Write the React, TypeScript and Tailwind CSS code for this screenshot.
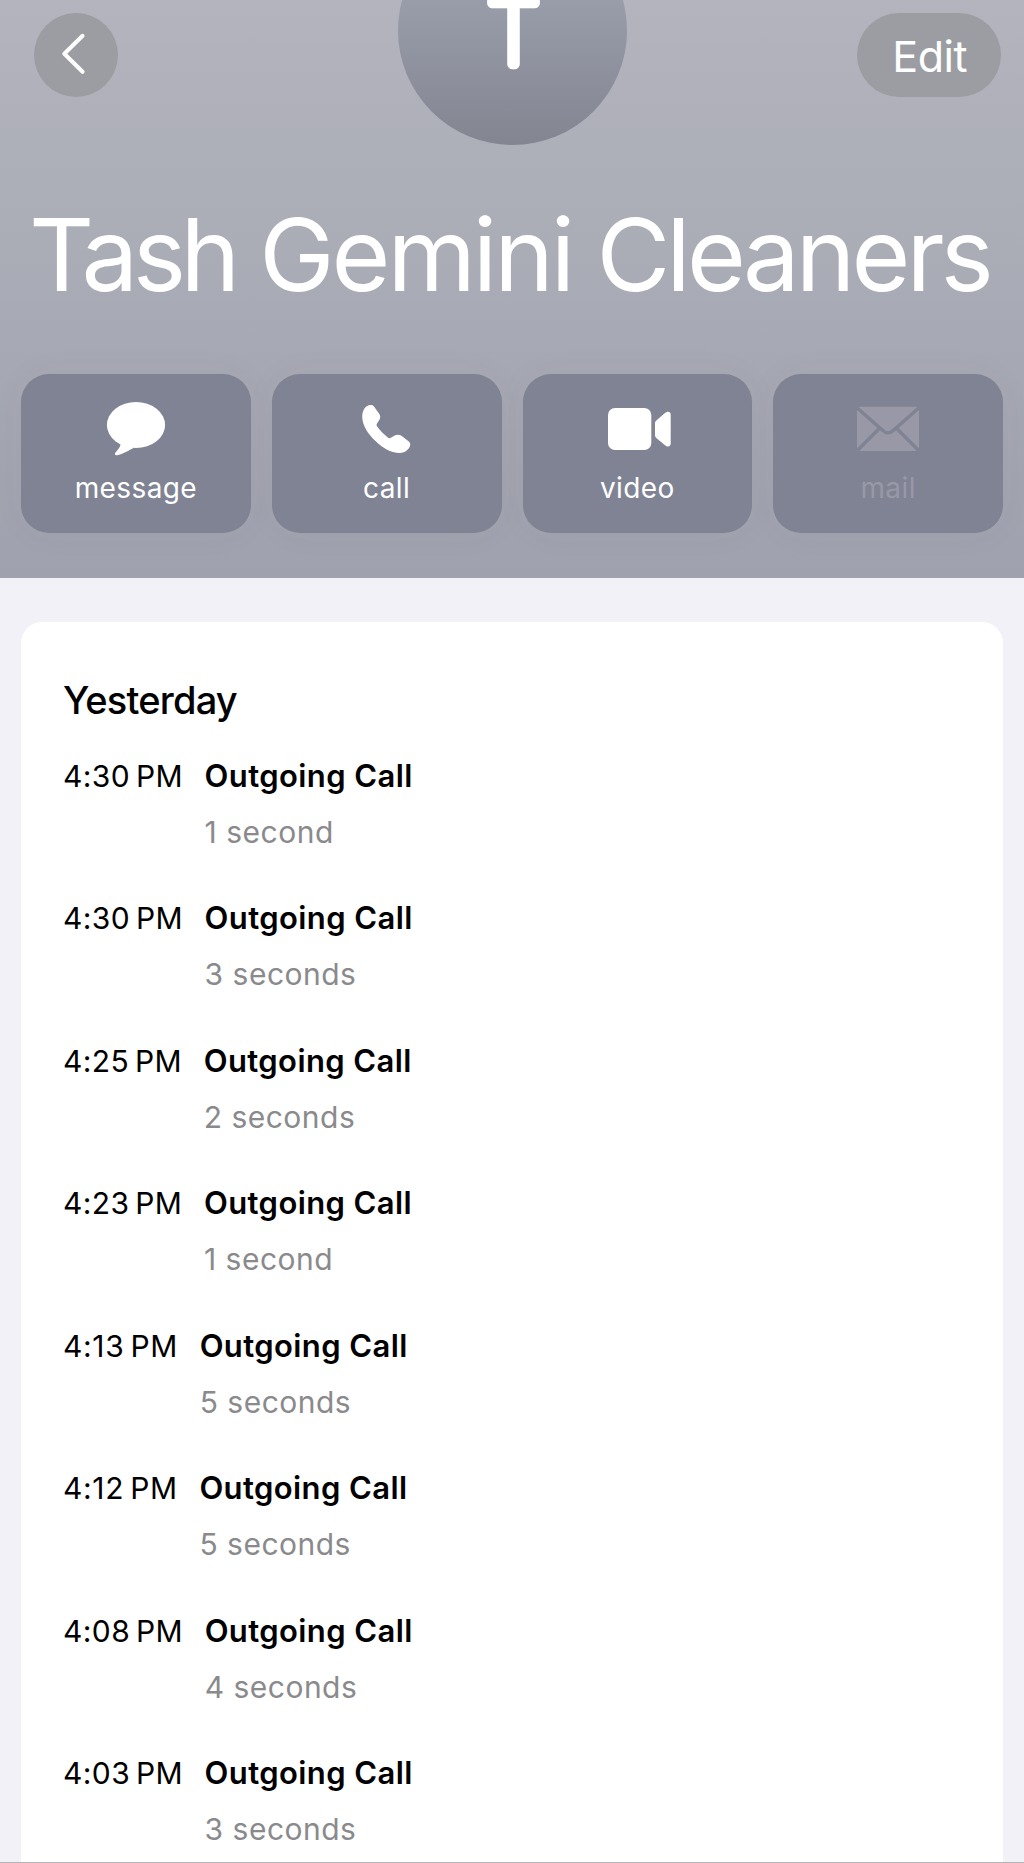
import type { ReactNode } from 'react';

const MessageIcon = () => (
  <svg viewBox="0 0 64 54" className="w-16 h-[54px] overflow-visible" fill="currentColor">
    <ellipse cx="32" cy="23" rx="29.1" ry="23" />
    <path d="M16.5 41C17 45 13 48.5 11.2 51C10.4 52.6 11.3 53.4 13 53.2C19 52.5 25 48 30 45.8Z" />
  </svg>
);

const PhoneIcon = () => (
  <svg viewBox="0 0 64 54" className="w-16 h-[54px] overflow-visible" fill="currentColor">
    <path d="M15.6 3C10.5 3 7.2 8.5 7.2 14.7C7.4 24 14 33 20.5 39C27.5 45.8 35.5 51 44.6 51C50.5 51 54.8 46.5 55.2 43C55.4 41.2 54.8 40.2 53.5 39.2L46.8 34C44.6 32.5 42.4 32.3 40.2 33.3L36.2 35.6C35 36.4 34 36.4 32.8 35.4C28.5 32 25 28.5 22 24.2C21.4 23.2 21.4 22.4 22 21.4L24.3 18C25.6 16 25.6 14 24.3 12L19.2 4.8C18.2 3.4 17.2 3 15.6 3Z" />
  </svg>
);

const VideoIcon = () => (
  <svg viewBox="0 0 64 54" className="w-16 h-[54px] overflow-visible" fill="currentColor">
    <rect x="3" y="6" width="43.3" height="42" rx="7" />
    <path d="M50 21.3C50 20 50.3 19.3 51.3 18.4L60 11C61.2 10.1 62 9.8 63 9.8C64.7 9.8 65.7 11 65.7 12.8V41.5C65.7 43.3 64.7 44.4 63 44.4C62 44.4 61.2 44.1 60 43.2L51.3 35.9C50.3 35 50 34.3 50 33Z" />
  </svg>
);

const MailIcon = () => (
  <svg viewBox="0 0 64 54" className="w-16 h-[54px] overflow-visible">
    <rect x="1" y="4.7" width="62" height="44.3" rx="3.5" fill="currentColor" />
    <g fill="none" stroke="#808393" strokeWidth="3.5">
      <path d="M1.5 6.2L26.5 28.2C30.5 31.8 33.5 31.8 37.5 28.2L62.5 6.2" />
      <path d="M23 26.8L1.8 48M41 26.8L62.2 48" />
    </g>
  </svg>
);

const actions: { label: string; icon: ReactNode; disabled?: boolean }[] = [
  { label: "message", icon: <MessageIcon /> },
  { label: "call", icon: <PhoneIcon /> },
  { label: "video", icon: <VideoIcon /> },
  { label: "mail", icon: <MailIcon />, disabled: true }
];

const calls = [
  { id: 1, time: "4:30", duration: "1 second" },
  { id: 2, time: "4:30", duration: "3 seconds" },
  { id: 3, time: "4:25", duration: "2 seconds" },
  { id: 4, time: "4:23", duration: "1 second" },
  { id: 5, time: "4:13", duration: "5 seconds" },
  { id: 6, time: "4:12", duration: "5 seconds" },
  { id: 7, time: "4:08", duration: "4 seconds" },
  { id: 8, time: "4:03", duration: "3 seconds" }
];

const Header = () => (
  <header className="h-[578px] shrink-0 overflow-hidden bg-linear-to-b from-[#b3b4bd] via-[#abadb7] via-38% to-[#9fa1ae] text-white">
    <div className="grid h-[145px] grid-cols-[1fr_229px_1fr] items-start">
      <button className="ml-[34px] mt-[13px] size-[83.5px] rounded-full bg-[#9c9da3]">
        <svg viewBox="0 0 83.5 83.5" fill="none" stroke="currentColor" strokeWidth="4" strokeLinecap="round" strokeLinejoin="round">
          <path d="M48.6 22.8L30.3 40.8L48.6 58.8" />
        </svg>
      </button>
      {/* Avatar is scrolled partly off the top edge */}
      <div className="-mt-[84px] size-[229px] rounded-full bg-linear-to-b from-[#a6a9b8] to-[#838691]">
        <svg viewBox="0 0 229 229" className="size-full">
          <text
            x="115.5"
            y="147.8"
            textAnchor="middle"
            fill="currentColor"
            stroke="currentColor"
            strokeWidth="10.6"
            strokeLinejoin="round"
            className="font-[Inter,sans-serif] text-[86px] font-thin"
          >
            T
          </text>
        </svg>
      </div>
      <button className="mr-[23.5px] mt-[13px] h-[83.5px] w-[143.5px] justify-self-end rounded-full bg-[#9c9da3] pl-0.5 pt-[3px] text-[43px] tracking-[-0.4px]">
        Edit
      </button>
    </div>

    <h1 className="mt-[49px] whitespace-nowrap pl-[29px] text-[101px] leading-[120px] tracking-[-4px]">
      <span className="tracking-[-5.4px]">Tash</span> <span className="tracking-[-3.1px]">Gemini</span> <span className="tracking-[-3.9px]">Cleaners</span>
    </h1>

    <div className="mt-[59.7px] grid grid-cols-4 gap-[21px] px-[21px]">
      {actions.map((action) => (
        <button
          key={action.label}
          className={`flex h-[159.4px] flex-col items-center rounded-[28px] bg-[#808393] pt-[28.7px] shadow-[0_0_36px_rgba(90,80,100,0.04)] ${action.disabled ? "text-[#9998a6]" : "text-white"}`}
        >
          {action.icon}
          <span className="mt-[13.6px] text-[28px] leading-9 tracking-[0.4px]">{action.label}</span>
        </button>
      ))}
    </div>
  </header>
);

const App = () => {
  return (
    <div className="flex h-[1863px] w-[1024px] flex-col overflow-hidden border-b border-[#b4b4b8] bg-[#f2f1f8] font-[Inter,'Noto_Sans',sans-serif] text-black">
      <Header />
      <main className="mx-[21px] mt-11 h-[1240px] shrink-0 rounded-t-[21px] bg-white pl-[42px] pt-[53px]">
        <h2 className="text-[38px] font-medium leading-[50px] tracking-[-0.8px]">Yesterday</h2>
        <ul className="mt-[30.5px]">
          {calls.map((call) => (
            <li key={call.id} className="flex h-[142.5px] gap-[21.6px]">
              <span className={`whitespace-nowrap text-[30px] leading-10 ${call.time.includes(":1") ? "tracking-[0.65px]" : "tracking-[0.4px]"}`}>
                {call.time}&#8239;PM
              </span>
              <div>
                <p className="text-[31px] font-semibold leading-10 tracking-[0.4px]">Outgoing Call</p>
                <p className="mt-4 text-[30px] leading-10 tracking-[0.5px] text-[#8a8a8d]">{call.duration}</p>
              </div>
            </li>
          ))}
        </ul>
      </main>
    </div>
  );
};

export default App;
